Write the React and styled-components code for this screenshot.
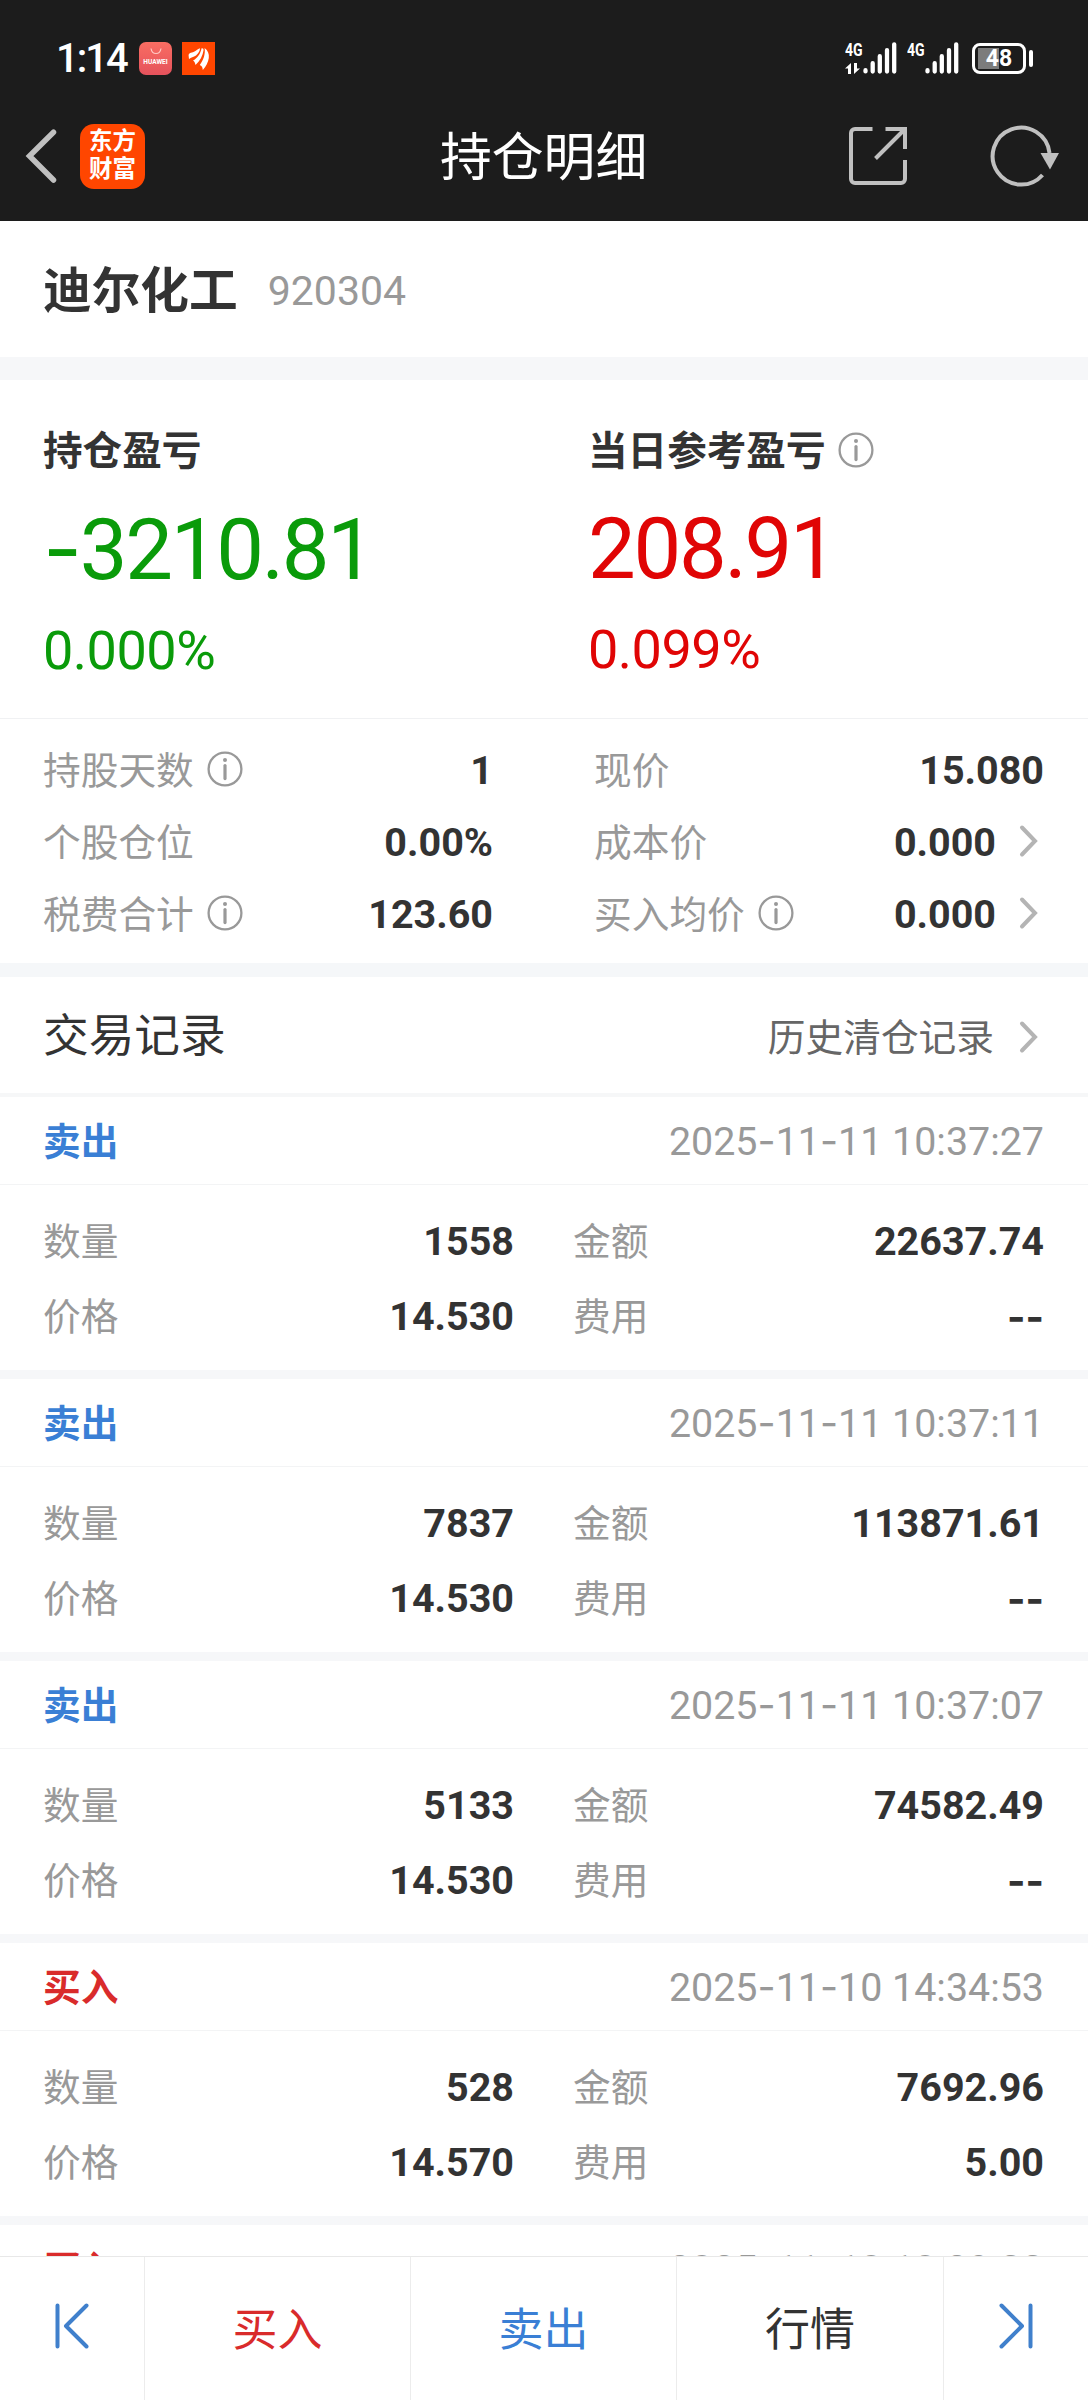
import styled, { createGlobalStyle } from 'styled-components';

const stats = [
  [
    { label: '持股天数', value: '1', info: true },
    { label: '个股仓位', value: '0.00%' },
    { label: '税费合计', value: '123.60', info: true },
  ],
  [
    { label: '现价', value: '15.080' },
    { label: '成本价', value: '0.000', link: true },
    { label: '买入均价', value: '0.000', info: true, link: true },
  ],
];

const records = [
  { side: 'sell', time: '2025-11-11 10:37:27', count: '1558', amount: '22637.74', price: '14.530', fee: '--' },
  { side: 'sell', time: '2025-11-11 10:37:11', count: '7837', amount: '113871.61', price: '14.530', fee: '--' },
  { side: 'sell', time: '2025-11-11 10:37:07', count: '5133', amount: '74582.49', price: '14.530', fee: '--' },
  { side: 'buy', time: '2025-11-10 14:34:53', count: '528', amount: '7692.96', price: '14.570', fee: '5.00' },
  { side: 'buy', time: '2025-11-10 10:29:33' },
];

// the digit font has a very short hyphen, so hyphens get a wider one
const Digits = ({ children }) =>
  children.split(/(-)/).map((part, i) => (part === '-' ? <Hyphen key={i}>-</Hyphen> : part));

const Info = () => (
  <svg width='36' height='36' viewBox='0 0 36 36' fill='none' stroke='#999' strokeLinecap='round'>
    <circle cx='18' cy='18' r='16.4' strokeWidth='2.3' />
    <path d='M18 14.6v13' strokeWidth='3.2' />
    <circle cx='18' cy='9' r='2' fill='#999' stroke='none' />
  </svg>
);

const Arrow = () => (
  <svg width='19' height='34' viewBox='0 0 19 34' fill='none' stroke='#b4b4b4' strokeWidth='4' strokeLinecap='round'>
    <path d='M3 3.5L16 17L3 30.5' />
  </svg>
);

const Signal = () => (
  <svg width='34' height='32' viewBox='0 0 34 32' fill='none' stroke='#fff' strokeWidth='4.3' strokeLinecap='round'>
    <path d='M2.5 28.2v1.2M9.7 21.2v8.3M16.8 14.2v15.3M24 8.2v21.3M31.2 2.3v27.2' />
  </svg>
);

const App = () => {
  return (
    <Page>
      <GlobalStyle />
      <Header>
        <StatusBar>
          <Time>1:14</Time>
          <StoreIcon>
            <svg width='12' height='7' viewBox='0 0 12 7' fill='none' stroke='#ffc9c4' strokeWidth='1.2'>
              <path d='M1 0.5c0.5 3 2.500 5 5 5s4.500-2 5-5' />
            </svg>
            HUAWEI
          </StoreIcon>
          <svg width='33' height='33' viewBox='0 0 33 33'>
            <rect width='33' height='33' fill='#ff4600' />
            <g fill='#fff'>
              <path d='M6.600 13.500C6.600 11 9 11 12 9.800C14 9 15.500 7.200 18 6.300C18 9 16.500 11.500 14 13.500C11.500 15.500 9 15 7 17z' />
              <path d='M11 18.500C15 16.500 18.500 12 19.600 6.200C21 6 21.800 6.600 21.500 8.500C20.800 13.500 18 19 13.500 23C13 20.500 12.500 19.500 11 18.500z' />
              <path d='M22.600 6C26 8.500 27.300 12 26.800 16C26.300 20 24 24.500 20.800 28C20.500 26 20.500 24.300 17.800 23C21.500 18 23.500 12 22.600 6z' />
            </g>
          </svg>
          <Spacer />
          <Network>
            <span>4G</span>
            <svg width='15' height='11' viewBox='0 0 15 11' fill='#fff'>
              <path d='M0 5.500L6 0V11H3V5.500zM15 5.500L9 11V0H12V5.500z' />
            </svg>
          </Network>
          <Signal />
          <Network second>
            <span>4G</span>
          </Network>
          <Signal />
          <Battery>48</Battery>
          <BatteryTip />
        </StatusBar>
        <TitleBar>
          <svg width='32' height='54' viewBox='0 0 32 54' fill='none' stroke='#c0c0c0' strokeWidth='5.500' strokeLinecap='round'>
            <path d='M28.500 3.200L4.500 27L28.500 51' />
          </svg>
          <Badge>
            东方
            <br />
            财富
          </Badge>
          <Title>持仓明细</Title>
          <svg width='58' height='58' viewBox='0 0 58 58' fill='none' stroke='#c0c0c0' strokeWidth='4'>
            <path d='M23.500 2H6a4 4 0 0 0-4 4V52a4 4 0 0 0 4 4H52a4 4 0 0 0 4-4V33' />
            <path d='M36.500 2H56V22M54 4L26.500 31.500' />
          </svg>
          <svg width='70' height='62' viewBox='0 0 70 62'>
            <path d='M52.500 50A28.500 28.500 0 1 1 59.500 28' fill='none' stroke='#c0c0c0' strokeWidth='4' />
            <path d='M50.500 28H69L60 44.500z' fill='#c0c0c0' />
          </svg>
        </TitleBar>
      </Header>

      <Stock>
        <StockName>迪尔化工</StockName>
        <StockCode>920304</StockCode>
      </Stock>

      <Profit>
        <ProfitItem color='#0a9b0a'>
          <h3>持仓盈亏</h3>
          <p>
            <Digits>-3210.81</Digits>
          </p>
          <strong>0.000%</strong>
        </ProfitItem>
        <ProfitItem color='#e00505'>
          <h3>
            当日参考盈亏
            <Info />
          </h3>
          <p>208.91</p>
          <strong>0.099%</strong>
        </ProfitItem>
      </Profit>

      <Stats>
        {stats.map((column, i) => (
          <div key={i}>
            {column.map(({ label, value, info, link }) => (
              <Stat key={label}>
                <Label>{label}</Label>
                {info && <Info />}
                <Value>{value}</Value>
                {link && <Arrow />}
              </Stat>
            ))}
          </div>
        ))}
      </Stats>

      <RecordTitle>
        <h2>交易记录</h2>
        <a>历史清仓记录</a>
        <Arrow />
      </RecordTitle>

      <RecordList>
        {records.map(({ side, time, count, amount, price, fee }) => (
          <Record key={time}>
            <RecordHead>
              <Side side={side}>{side === 'buy' ? '买入' : '卖出'}</Side>
              <Date>
                <Digits>{time}</Digits>
              </Date>
            </RecordHead>
            {count && (
              <RecordBody>
                <Cell>
                  <Label>数量</Label>
                  <Value>{count}</Value>
                </Cell>
                <Cell>
                  <Label>金额</Label>
                  <Value>{amount}</Value>
                </Cell>
                <Cell>
                  <Label>价格</Label>
                  <Value>{price}</Value>
                </Cell>
                <Cell>
                  <Label>费用</Label>
                  <Value>
                    <Digits>{fee}</Digits>
                  </Value>
                </Cell>
              </RecordBody>
            )}
          </Record>
        ))}
      </RecordList>

      <Footer>
        <FooterButton>
          <svg width='34' height='46' viewBox='0 0 34 46' fill='none' stroke='#4080cc' strokeWidth='4' strokeLinecap='round' strokeLinejoin='round'>
            <path d='M2.500 2.500v41M31.500 2.500L11 23L31.500 43.500' />
          </svg>
        </FooterButton>
        <FooterButton color='#d92b2b'>买入</FooterButton>
        <FooterButton color='#3a7fd5'>卖出</FooterButton>
        <FooterButton color='#333'>行情</FooterButton>
        <FooterButton>
          <svg width='34' height='46' viewBox='0 0 34 46' fill='none' stroke='#4080cc' strokeWidth='4' strokeLinecap='round' strokeLinejoin='round'>
            <path d='M31.500 2.500v41M2.500 2.500L23 23L2.500 43.500' />
          </svg>
        </FooterButton>
      </Footer>
    </Page>
  );
};

const GlobalStyle = createGlobalStyle`
  * {
    box-sizing: border-box;
    margin: 0;
    padding: 0;
  }
  body {
    font-family: Roboto, 'Noto Sans CJK SC', sans-serif;
    color: #333;
    background: #fff;
  }
  svg {
    display: block;
    flex-shrink: 0;
  }
`;

const Page = styled.div`
  height: 2400px;
  display: flex;
  flex-direction: column;
  overflow: hidden;
`;

const Hyphen = styled.span`
  font-family: Inter, sans-serif;
`;

const Header = styled.header`
  height: 221px;
  flex-shrink: 0;
  background: #1c1c1c;
  color: white;
`;

const StatusBar = styled.div`
  height: 92px;
  padding: 24px 55px 0 56px;
  display: flex;
  align-items: center;
`;

const Time = styled.span`
  width: 83px;
  padding-top: 2px;
  font-size: 40px;
  font-weight: 500;
  line-height: 40px;
  letter-spacing: -2px;
`;

const StoreIcon = styled.div`
  width: 33px;
  height: 33px;
  margin-right: 10px;
  padding-top: 6px;
  display: flex;
  flex-direction: column;
  align-items: center;
  gap: 4px;
  border-radius: 7px;
  background: linear-gradient(#f96d62, #e5525c);
  font-size: 6.5px;
  font-weight: 700;
  line-height: 7px;
`;

const Spacer = styled.div`
  flex: 1;
`;

const Network = styled.div`
  width: 18px;
  height: 32px;
  margin-left: ${(props) => (props.second ? '10px' : '0')};
  display: flex;
  flex-direction: column;
  justify-content: space-between;

  span {
    font-size: 19px;
    font-weight: 700;
    line-height: 15px;
    transform: scaleX(0.74);
    transform-origin: left;
  }
`;

const Battery = styled.div`
  width: 54px;
  height: 31px;
  margin-left: 13px;
  display: flex;
  align-items: center;
  justify-content: center;
  border: 3px solid white;
  border-radius: 8px;
  background: linear-gradient(#7c7c7c, #7c7c7c) 3px center / 21px 21px no-repeat;
  font-size: 23px;
  font-weight: 700;
  line-height: 23px;
`;

const BatteryTip = styled.div`
  width: 4px;
  height: 17px;
  margin-left: 3px;
  border-radius: 2px;
  background: white;
`;

const TitleBar = styled.div`
  height: 128px;
  padding: 0 28px 0 25px;
  display: flex;
  align-items: center;

  svg:last-child {
    margin-left: 83px;
  }
`;

const Badge = styled.div`
  width: 65px;
  height: 65px;
  margin-left: 23px;
  padding-top: 3px;
  border-radius: 14px;
  background: #ff4600;
  text-align: center;
  font-size: 23.5px;
  font-weight: 700;
  line-height: 28px;
`;

const Title = styled.h1`
  flex: 1;
  padding: 5px 0 0 295px;
  font-size: 51.8px;
  font-weight: 400;
  line-height: 60px;
`;

const Stock = styled.section`
  height: 159px;
  flex-shrink: 0;
  padding: 0 43px;
  display: flex;
  align-items: center;
  border-bottom: 23px solid #f6f7f9;
`;

const StockName = styled.h2`
  padding-bottom: 4px;
  font-size: 48.7px;
  font-weight: 700;
`;

const StockCode = styled.span`
  margin-left: 30px;
  padding-top: 3px;
  font-size: 41px;
  color: #999;
`;

const Profit = styled.section`
  height: 339px;
  flex-shrink: 0;
  padding: 46px 0 0 43px;
  display: grid;
  grid-template-columns: 545px 1fr;
  border-bottom: 1px solid #f0f1f3;
`;

const ProfitItem = styled.div`
  h3 {
    height: 48px;
    display: flex;
    align-items: center;
    gap: 13px;
    font-size: 39.6px;
    line-height: 48px;
    padding-top: 4px;
  }
  h3 svg {
    margin-top: -4px;
  }
  p {
    margin-top: 25px;
    font-size: 85px;
    line-height: 100px;
    letter-spacing: -2.3px;
    white-space: nowrap;
    color: ${(props) => props.color};
  }
  strong {
    display: block;
    margin-top: 19px;
    font-size: 54px;
    font-weight: 400;
    line-height: 64px;
    letter-spacing: -0.5px;
    color: ${(props) => props.color};
  }
`;

const Stats = styled.section`
  height: 258px;
  flex-shrink: 0;
  padding: 14px 44px 0 43px;
  display: grid;
  grid-template-columns: 450px 450px;
  gap: 101px;
  border-bottom: 14px solid #f5f7f9;
`;

const Stat = styled.div`
  height: 72px;
  display: flex;
  align-items: center;

  svg {
    margin-left: 13px;
  }
  svg:last-child {
    margin: 0 6px 0 23px;
  }
`;

const Label = styled.span`
  padding-bottom: 4px;
  font-size: 37.7px;
  color: #999;
`;

const Value = styled.span`
  margin-left: auto;
  padding-top: 2px;
  font-size: 39.5px;
  font-weight: 700;
`;

const RecordTitle = styled.section`
  height: 120px;
  flex-shrink: 0;
  padding: 3px 50px 0 43px;
  display: flex;
  align-items: center;
  border-bottom: 4px solid #f6f7f8;

  h2 {
    flex: 1;
    padding-bottom: 9px;
    font-size: 45.7px;
    font-weight: 400;
  }
  a {
    margin-right: 25px;
    padding-bottom: 4px;
    font-size: 37.7px;
    color: #666;
  }
`;

const RecordList = styled.div`
  flex: 1;
  overflow: hidden;
`;

const Record = styled.div`
  height: 282px;
  border-bottom: 9px solid #f6f7f9;
`;

const RecordHead = styled.div`
  height: 88px;
  padding: 0 44px 0 43px;
  display: flex;
  align-items: center;
  justify-content: space-between;
  border-bottom: 1px solid #f3f4f5;
`;

const Side = styled.span`
  padding-bottom: 4px;
  font-size: 37.7px;
  font-weight: 700;
  color: ${(props) => (props.side === 'buy' ? '#d92b2b' : '#3a7fd5')};
`;

const Date = styled.span`
  font-size: 39.4px;
  color: #999;
`;

const RecordBody = styled.div`
  padding: 18px 44px 0 43px;
  display: grid;
  grid-template-columns: 471px 471px;
  column-gap: 59px;
`;

const Cell = styled.div`
  height: 75px;
  display: flex;
  align-items: center;
`;

const Footer = styled.footer`
  height: 144px;
  flex-shrink: 0;
  display: grid;
  grid-template-columns: 145px 266px 266px 267px 144px;
  border-top: 1px solid #e8e8e8;
`;

const FooterButton = styled.button`
  display: flex;
  align-items: center;
  justify-content: center;
  padding-bottom: 5px;
  border: none;
  border-right: 1px solid #ececec;
  background: white;
  font-family: inherit;
  font-size: 45px;
  color: ${(props) => props.color};

  &:last-child {
    border-right: none;
  }
`;

export default App;
